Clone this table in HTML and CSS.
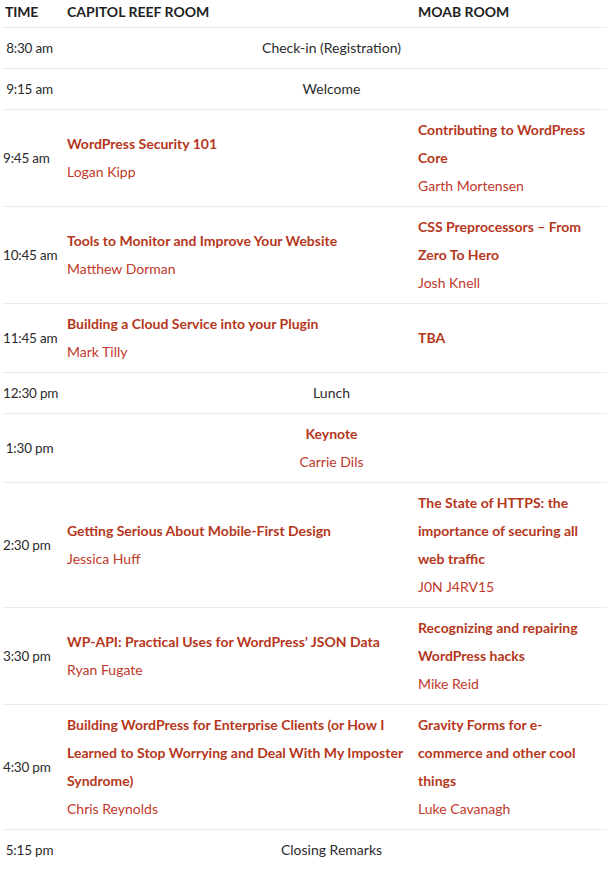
FILE: index.html
```html
<!DOCTYPE html>
<html>
<head>
<meta charset="utf-8">
<link rel="stylesheet" href="styles.css">
</head>
<body>
<table class="schedule">
  <colgroup>
    <col class="c-time">
    <col class="c-room1">
    <col class="c-room2">
  </colgroup>
  <thead>
    <tr class="head">
      <th class="time">Time</th>
      <th class="room">Capitol Reef Room</th>
      <th class="room">Moab Room</th>
    </tr>
  </thead>
  <tbody>
    <tr>
      <td class="time center">8:30 am</td>
      <td class="plenary" colspan="2">Check-in (Registration)</td>
    </tr>
    <tr>
      <td class="time center">9:15 am</td>
      <td class="plenary" colspan="2">Welcome</td>
    </tr>
    <tr>
      <td class="time">9:45 am</td>
      <td class="session first"><a class="title">WordPress Security 101</a><span class="speaker">Logan Kipp</span></td>
      <td class="session"><a class="title">Contributing to WordPress Core</a><span class="speaker">Garth Mortensen</span></td>
    </tr>
    <tr>
      <td class="time">10:45 am</td>
      <td class="session first"><a class="title">Tools to Monitor and Improve Your Website</a><span class="speaker">Matthew Dorman</span></td>
      <td class="session"><a class="title">CSS Preprocessors – From Zero To Hero</a><span class="speaker">Josh Knell</span></td>
    </tr>
    <tr>
      <td class="time">11:45 am</td>
      <td class="session first"><a class="title">Building a Cloud Service into your Plugin</a><span class="speaker">Mark Tilly</span></td>
      <td class="session"><a class="title">TBA</a></td>
    </tr>
    <tr>
      <td class="time center">12:30 pm</td>
      <td class="plenary" colspan="2">Lunch</td>
    </tr>
    <tr>
      <td class="time center">1:30 pm</td>
      <td class="plenary" colspan="2"><a class="title">Keynote</a><span class="speaker">Carrie Dils</span></td>
    </tr>
    <tr>
      <td class="time">2:30 pm</td>
      <td class="session first"><a class="title">Getting Serious About Mobile-First Design</a><span class="speaker">Jessica Huff</span></td>
      <td class="session"><a class="title">The State of HTTPS: the importance of securing all web traffic</a><span class="speaker">J0N J4RV15</span></td>
    </tr>
    <tr>
      <td class="time">3:30 pm</td>
      <td class="session first"><a class="title">WP-API: Practical Uses for WordPress’ JSON Data</a><span class="speaker">Ryan Fugate</span></td>
      <td class="session"><a class="title">Recognizing and repairing WordPress hacks</a><span class="speaker">Mike Reid</span></td>
    </tr>
    <tr>
      <td class="time">4:30 pm</td>
      <td class="session first"><a class="title">Building WordPress for Enterprise Clients (or How I Learned to Stop Worrying and Deal With My Imposter Syndrome)</a><span class="speaker">Chris Reynolds</span></td>
      <td class="session"><a class="title">Gravity Forms for e-commerce and other cool things</a><span class="speaker">Luke Cavanagh</span></td>
    </tr>
    <tr>
      <td class="time center">5:15 pm</td>
      <td class="plenary" colspan="2">Closing Remarks</td>
    </tr>
  </tbody>
</table>
</body>
</html>
```

FILE: styles.css
```css
html, body {
  margin: 0;
  padding: 0;
  background: #ffffff;
}

body {
  font-family: Lato, "Liberation Sans", sans-serif;
  font-size: 14px;
  color: #2b2b2b;
}

.schedule {
  margin: 0 0 0 3px;
  width: 604px;
  border-collapse: collapse;
  table-layout: fixed;
}

.c-time { width: 53px; }
.c-room1 { width: 362px; }
.c-room2 { width: 189px; }

.schedule tr {
  border-bottom: 1px solid #ececec;
}

.schedule td,
.schedule th {
  padding: 6px 0;
  line-height: 28px;
  vertical-align: middle;
  text-align: left;
}

.schedule .head th {
  padding: 0 0 3px;
  line-height: 24px;
  font-weight: 700;
  text-transform: uppercase;
  color: #1f1f1f;
  font-size: 14px;
}

.schedule .head th.time { padding-left: 2px; }
.schedule .head th.room:nth-child(2) { padding-left: 11px; }

.schedule .time {
  white-space: nowrap;
  font-size: 13.5px;
  letter-spacing: -0.2px;
}

.schedule .time.center {
  text-align: center;
}

.schedule .session.first {
  padding-left: 11px;
  padding-right: 8px;
}

.schedule .session {
  padding-right: 6px;
}

.schedule .plenary {
  text-align: center;
}

.title {
  display: block;
  font-weight: 700;
  color: #b5371c;
  text-decoration: none;
}

.speaker {
  display: block;
  color: #c0392b;
}
```
